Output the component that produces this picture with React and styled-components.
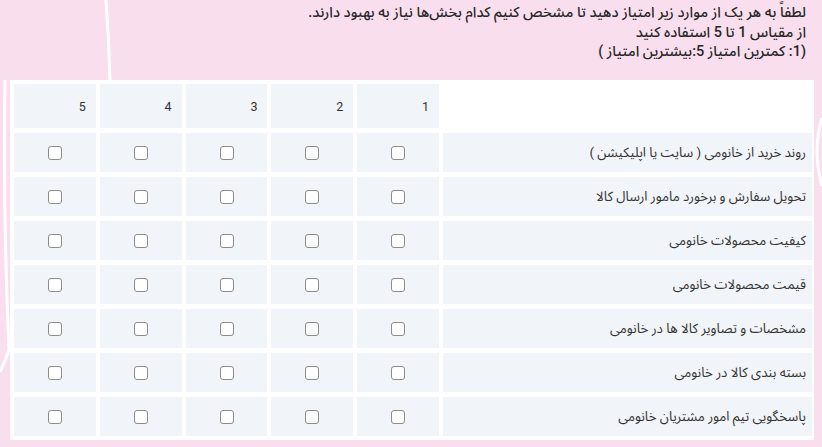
import styled, { createGlobalStyle } from 'styled-components'

const GlobalStyle = createGlobalStyle`
  html, body {
    margin: 0;
    padding: 0;
    background: #f9dfee;
  }
  body {
    font-family: Roboto, "Noto Sans Arabic", "DejaVu Sans", sans-serif;
  }
`

const Page = styled.div`
  position: relative;
  width: 822px;
  height: 447px;
  overflow: hidden;
  background: #f9dfee;
  direction: rtl;
`

const Decor = styled.svg`
  position: absolute;
  inset: 0;
  pointer-events: none;
`

const Content = styled.div`
  position: relative;
  display: flex;
  flex-direction: column;
  padding: 3px 8px 0 10px;
`

const Intro = styled.div`
  padding-right: 8px;
  color: #262626;
  font-size: 14.5px;
  line-height: 19.5px;
  font-weight: 500;
  height: 77px;
  flex-shrink: 0;
`

const Sheet = styled.div`
  background: #ffffff;
  padding: 4px 2px 4px 4px;
  display: grid;
  grid-template-columns: 369px repeat(5, 1fr);
  grid-template-rows: 44px;
  grid-auto-rows: 39px;
  gap: 5px 4px;
`

const Cell = styled.div`
  display: flex;
  align-items: center;
  justify-content: ${(p) => (p.$center ? 'center' : 'flex-start')};
  padding: 0 ${(p) => (p.$label ? '6px' : '10px')};
  background: ${(p) => (p.$blank ? '#ffffff' : '#f1f4f8')};
  color: #333;
  font-size: ${(p) => (p.$label ? '13.3px' : '12.5px')};
`

const Check = styled.input.attrs({ type: 'checkbox' })`
  appearance: none;
  margin: 0;
  width: 14px;
  height: 14px;
  border: 1px solid #8c8c8c;
  border-radius: 3px;
  background: #fff;
`

const items = [
  'روند خرید از خانومی ( سایت یا اپلیکیشن )',
  'تحویل سفارش و برخورد مامور ارسال کالا',
  'کیفیت محصولات خانومی',
  'قیمت محصولات خانومی',
  'مشخصات و تصاویر کالا ها در خانومی',
  'بسته بندی کالا در خانومی',
  'پاسخگویی تیم امور مشتریان خانومی',
]

export default function App() {
  return (
    <>
      <GlobalStyle />
      <Page>
        <Decor width="822" height="447" viewBox="0 0 822 447">
          <path d="M106 0 Q109 40 110 82" stroke="#fff" strokeWidth="3" fill="none" />
          <path d="M5 80 Q3 220 9 350 Q5 362 0 372" stroke="#fff" strokeWidth="3" fill="none" />
          <path d="M822 118 Q812 150 822 186" stroke="#fff" strokeWidth="3" fill="none" />
        </Decor>
        <Content>
          <Intro>
            <div>لطفاً به هر یک از موارد زیر امتیاز دهید تا مشخص کنیم کدام بخش‌ها نیاز به بهبود دارند.</div>
            <div>از مقیاس 1 تا 5 استفاده کنید</div>
            <div>(1: کمترین امتیاز 5:بیشترین امتیاز )</div>
          </Intro>
          <Sheet>
            <Cell $blank $label />
            {[1, 2, 3, 4, 5].map((n) => (
              <Cell key={n}>{n}</Cell>
            ))}
            {items.map((text) => (
              <Row key={text} text={text} />
            ))}
          </Sheet>
        </Content>
      </Page>
    </>
  )
}

function Row({ text }) {
  return (
    <>
      <Cell $label>{text}</Cell>
      {[1, 2, 3, 4, 5].map((n) => (
        <Cell $center key={n}>
          <Check />
        </Cell>
      ))}
    </>
  )
}
